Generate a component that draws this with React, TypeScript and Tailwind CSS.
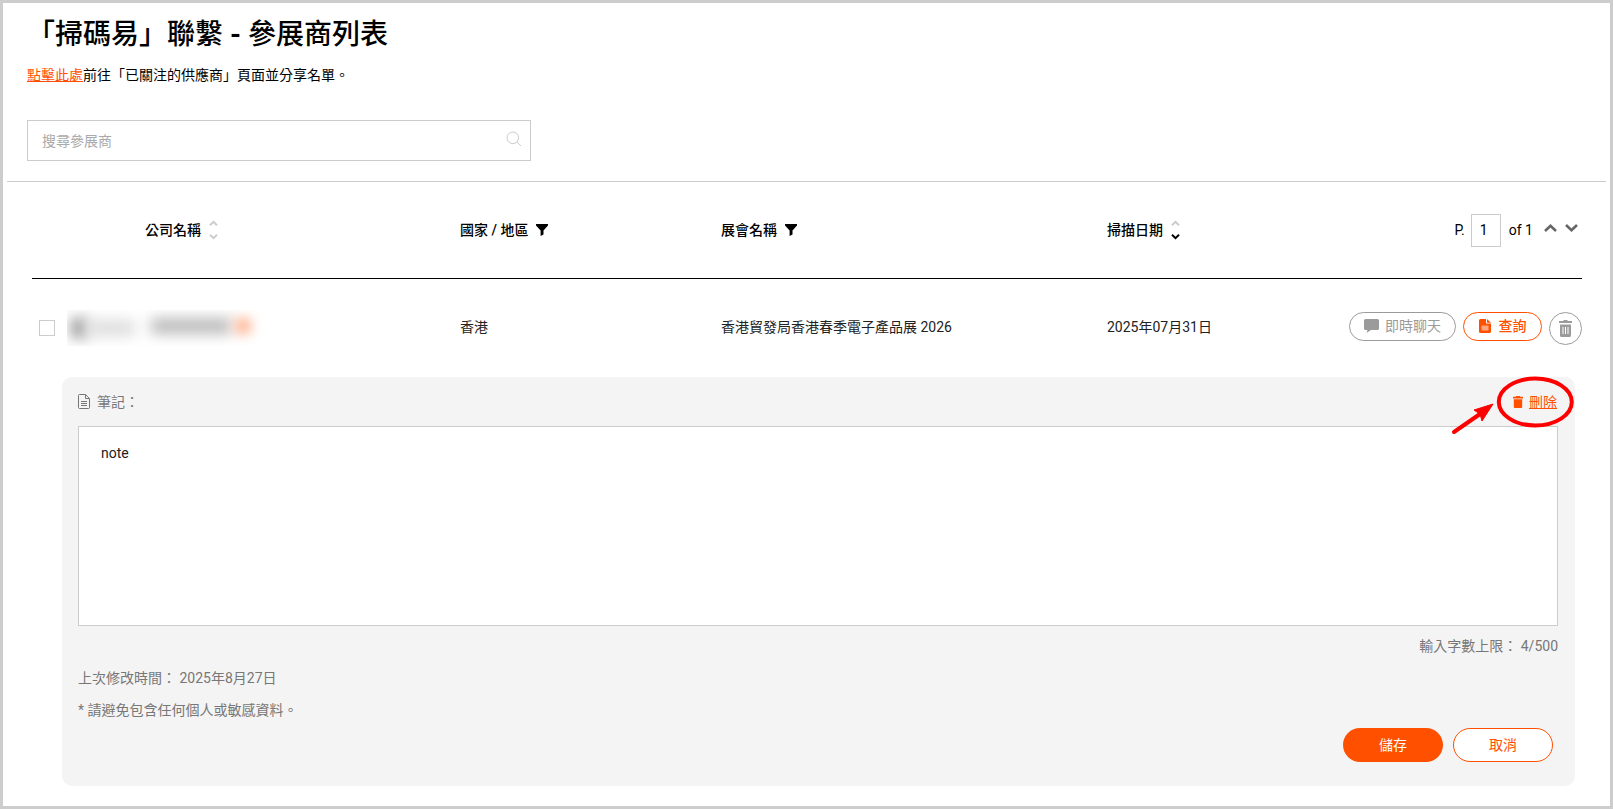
import { useState } from "react";

const MAX_LENGTH = 500;

function SortArrows({ active }: { active?: "asc" | "desc" }) {
  return (
    <svg width="9" height="20" viewBox="0 0 9 20" fill="none" strokeWidth="2">
      <path d="M1 5.2 4.5 1.8 8 5.2" stroke={active === "asc" ? "#000" : "#ccc"} />
      <path d="M1 14.8 4.5 18.2 8 14.8" stroke={active === "desc" ? "#000" : "#ccc"} />
    </svg>
  );
}

function FilterIcon() {
  return (
    <svg width="12" height="12" viewBox="0 0 12 12" fill="#000">
      <path d="M0 0h12v1.4L7.5 6.4V10.6L4.6 12V6.4L0 1.4z" />
    </svg>
  );
}

function SearchIcon() {
  return (
    <svg width="16" height="16" viewBox="0 0 16 16" fill="none" stroke="#ccc">
      <circle cx="6.8" cy="6.8" r="5.8" />
      <path d="m11 11 4 4" />
    </svg>
  );
}

function ChatIcon() {
  return (
    <svg width="15" height="14" viewBox="0 0 15 14" fill="#9b9b9b">
      <path d="M1.5 0h12A1.5 1.5 0 0 1 15 1.5v8a1.5 1.5 0 0 1-1.5 1.5H7l-4.5 3 1-3h-2A1.5 1.5 0 0 1 0 9.5v-8A1.5 1.5 0 0 1 1.5 0z" />
    </svg>
  );
}

function InquiryIcon() {
  return (
    <svg width="12" height="14" viewBox="0 0 12 14" fill="#ff5000">
      <path d="M1.5 0H7v4.5h5v8a1.5 1.5 0 0 1-1.5 1.5h-9A1.5 1.5 0 0 1 0 12.5v-11A1.5 1.5 0 0 1 1.5 0z" />
      <path d="M8 0l4 3.7H8z" />
      <path d="M2.5 6.5h7v5h-7z" fill="#ffa780" />
    </svg>
  );
}

function TrashIcon() {
  return (
    <svg width="13" height="17" viewBox="0 0 13 17" fill="#9b9b9b">
      <path d="M4.5 0h4v1H13v2H0V1h4.5z" />
      <path d="M1 4.5h11v11a1.5 1.5 0 0 1-1.5 1.5h-8A1.5 1.5 0 0 1 1 15.5z" />
      <path d="M4 7v7M6.5 7v7M9 7v7" stroke="#fff" />
    </svg>
  );
}

function NoteIcon() {
  return (
    <svg width="12" height="15" viewBox="0 0 12 15" fill="none" stroke="#777">
      <path d="M.5 1.5a1 1 0 0 1 1-1h6l4 4v9a1 1 0 0 1-1 1h-9a1 1 0 0 1-1-1z" />
      <path d="M7.5.5v4h4M3 7.5h6M3 9.5h6M3 11.5h6" />
    </svg>
  );
}

export default function App() {
  const [note, setNote] = useState("note");

  return (
    <div className="min-h-screen border-3 border-[#cdcdcd] bg-white px-1 pb-5 font-[Roboto,'Noto_Sans_CJK_TC',sans-serif] text-sm text-black">
      <header className="px-5 pt-3.5">
        <h1 className="text-[28px] leading-9 font-medium">
          「掃碼易」聯繫 <b>-</b> 參展商列表
        </h1>
        <p className="mt-2.5 leading-6">
          <a href="#" className="text-[#ff5000] underline">點擊此處</a>
          前往「已關注的供應商」頁面並分享名單。
        </p>
        <div className="mt-[33px] flex h-[41px] w-[504px] max-w-full items-center border border-[#ccc] pr-2 pl-3.5">
          <input
            type="search"
            aria-label="搜尋參展商"
            placeholder="搜尋參展商"
            className="min-w-0 grow outline-none placeholder:text-[#aaa]"
          />
          <button type="button" aria-label="搜尋" className="pb-1">
            <SearchIcon />
          </button>
        </div>
      </header>

      <hr className="mt-5 border-[#ccc]" />

      <main className="pr-6 pl-[25px]">
        <table className="w-full table-fixed border-separate border-spacing-0 text-left">
          <colgroup>
            <col className="w-[428px]" />
            <col className="w-[261px]" />
            <col />
            <col className="w-[242px]" />
            <col className="w-[233px]" />
          </colgroup>
          <thead>
            <tr className="*:h-[97px] *:border-b *:border-black *:p-0 *:font-medium">
              <th>
                <button type="button" className="ml-[113px] flex items-center gap-2 font-medium">
                  公司名稱
                  <SortArrows />
                </button>
              </th>
              <th>
                <button type="button" className="flex items-center gap-2 font-medium">
                  國家 / 地區
                  <FilterIcon />
                </button>
              </th>
              <th>
                <button type="button" className="flex items-center gap-2 font-medium">
                  展會名稱
                  <FilterIcon />
                </button>
              </th>
              <th>
                <button type="button" className="flex items-center gap-2 font-medium">
                  掃描日期
                  <SortArrows active="desc" />
                </button>
              </th>
              <th>
                <div className="flex items-center justify-end pr-1 font-normal">
                  <label htmlFor="page">P.</label>
                  <input
                    id="page"
                    defaultValue="1"
                    className="mr-2 ml-1.5 h-[33px] w-[30px] border border-[#ccc] pl-2 outline-none"
                  />
                  of 1
                  <button type="button" aria-label="上一頁" className="ml-[11px] pb-1">
                    <svg width="13" height="8" viewBox="0 0 13 8" fill="none" stroke="#666" strokeWidth="2.6">
                      <path d="M1 7 6.5 1.8 12 7" />
                    </svg>
                  </button>
                  <button type="button" aria-label="下一頁" className="ml-2 pb-1">
                    <svg width="13" height="8" viewBox="0 0 13 8" fill="none" stroke="#666" strokeWidth="2.6">
                      <path d="M1 1 6.5 6.2 12 1" />
                    </svg>
                  </button>
                </div>
              </th>
            </tr>
          </thead>
          <tbody>
            <tr className="text-[#222] *:h-[98px] *:p-0">
              <td>
                <div className="flex items-center pl-[7px]">
                  <input
                    type="checkbox"
                    aria-label="選擇參展商"
                    className="size-4 appearance-none border border-[#ccc] checked:bg-[#ff5000]"
                  />
                  <div className="ml-3 flex h-9 items-center overflow-hidden pr-4 pl-1" aria-hidden="true">
                    <span className="h-5 w-4 bg-[#999] blur-[7px]" />
                    <span className="h-4 w-12 bg-[#ddd] blur-[7px]" />
                    <span className="mb-1 ml-4 h-4 w-20 bg-[#bbb] blur-[7px]" />
                    <span className="mb-1 ml-1 size-4 bg-[#ffb899] blur-[6px]" />
                  </div>
                </div>
              </td>
              <td className="pb-0.5!">香港</td>
              <td className="pb-0.5!">香港貿發局香港春季電子產品展 2026</td>
              <td className="pb-0.5!">2025年07月31日</td>
              <td>
                <div className="flex items-start justify-end gap-[7px]">
                  <button
                    type="button"
                    className="flex h-[29px] w-[107px] items-center justify-center gap-1.5 rounded-full border border-[#9b9b9b] text-[#9b9b9b]"
                  >
                    <ChatIcon />
                    即時聊天
                  </button>
                  <button
                    type="button"
                    className="flex h-[29px] w-[79px] items-center justify-center gap-2 rounded-full border border-[#ff5000] font-medium text-[#ff5000]"
                  >
                    <InquiryIcon />
                    查詢
                  </button>
                  <button
                    type="button"
                    aria-label="刪除參展商"
                    className="flex size-[33px] items-center justify-center rounded-full border border-[#9b9b9b]"
                  >
                    <TrashIcon />
                  </button>
                </div>
              </td>
            </tr>
          </tbody>
        </table>

        <section className="mr-[7px] ml-[30px] rounded-[10px] bg-[#f4f4f4] pr-[17px] pb-6 pl-4 text-[#777]">
          <div className="flex h-[49px] items-center justify-between">
            <label htmlFor="note" className="flex items-center gap-[7px]">
              <NoteIcon />
              筆記：
            </label>
            <div className="relative">
              <a href="#" className="flex items-center gap-1.5 pr-px text-[#ff5000] underline">
                <svg width="10" height="12" viewBox="0 0 10 12" fill="#ff5000">
                  <path d="M3 0h4v.8h3v1.6H0V.8h3zM.8 3.2h8.4V11a1 1 0 0 1-1 1H1.8a1 1 0 0 1-1-1z" />
                </svg>
                刪除
              </a>
              {/* hand-drawn pointer around the delete link */}
              <svg
                className="pointer-events-none absolute -top-4 -right-4"
                width="124"
                height="60"
                viewBox="0 0 124 60"
                fill="none"
                stroke="#f00"
              >
                <ellipse cx="85.3" cy="26" rx="36.5" ry="23.5" strokeWidth="4" />
                <path d="M4 56 30 38" strokeWidth="4" strokeLinecap="round" />
                <path d="M43 28 24 34 30 38 32 45z" fill="#f00" strokeLinejoin="round" />
              </svg>
            </div>
          </div>
          <textarea
            id="note"
            value={note}
            maxLength={MAX_LENGTH}
            onChange={(e) => setNote(e.target.value)}
            className="block h-[200px] w-full resize-none border border-[#ccc] bg-white px-[22px] py-4 text-[#222] outline-none"
          />
          <p className="mt-2 text-right leading-6">輸入字數上限： {note.length}/{MAX_LENGTH}</p>
          <p className="mt-2 leading-6">上次修改時間： 2025年8月27日</p>
          <p className="mt-2 leading-6">* 請避免包含任何個人或敏感資料。</p>
          <div className="mt-1.5 flex justify-end gap-2.5 pr-[5px]">
            <button type="button" className="h-[34px] w-[100px] rounded-full bg-[#ff5000] text-white">
              儲存
            </button>
            <button
              type="button"
              className="h-[34px] w-[100px] rounded-full border border-[#ff5000] bg-white text-[#ff5000]"
            >
              取消
            </button>
          </div>
        </section>
      </main>
    </div>
  );
}
